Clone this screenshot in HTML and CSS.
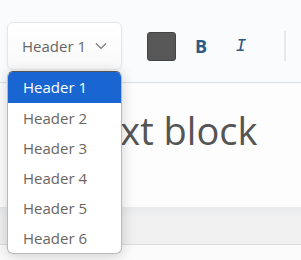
FILE: index.html
```html
<!DOCTYPE html>
<html lang="en">
<head>
    <meta charset="UTF-8">
    <title>Editor</title>
    <link rel="stylesheet" href="styles.css">
</head>
<body>
    <div class="toolbar">
        <div class="toolbar-row">
            <div class="select-wrap">
                <button class="select-button">
                    <span class="select-label">Header 1</span>
                    <svg class="chevron" width="12" height="8" viewBox="0 0 12 8">
                        <path d="M1 1.5 L6 6.5 L11 1.5" fill="none" stroke="#777" stroke-width="1.2"/>
                    </svg>
                </button>
                <ul class="select-menu">
                    <li class="menu-item active">Header 1</li>
                    <li class="menu-item">Header 2</li>
                    <li class="menu-item">Header 3</li>
                    <li class="menu-item">Header 4</li>
                    <li class="menu-item">Header 5</li>
                    <li class="menu-item">Header 6</li>
                </ul>
            </div>
            <div class="color-swatch"></div>
            <button class="format-btn bold">B</button>
            <button class="format-btn italic">I</button>
            <div class="divider"></div>
        </div>
    </div>

    <div class="editor">
        <div class="block">
            <h1 class="block-text">Text block</h1>
        </div>
        <div class="block-gap"></div>
    </div>
</body>
</html>
```

FILE: styles.css
```css
* {
    margin: 0;
    padding: 0;
    box-sizing: border-box;
}

body {
    font-family: 'Open Sans', 'Noto Sans', sans-serif;
    background: #fbfbfc;
    color: #555;
    width: 301px;
    height: 260px;
    overflow: hidden;
}

.toolbar {
    height: 83px;
    padding: 22px 0 0 7px;
    background: #fafbfc;
    border-bottom: 1px solid #dedfe2;
}

.toolbar-row {
    height: 48px;
    display: flex;
    align-items: center;
}

.select-wrap {
    position: relative;
    width: 115px;
    height: 48px;
}

.select-button {
    width: 100%;
    height: 100%;
    display: flex;
    align-items: center;
    justify-content: space-between;
    padding: 0 14px 0 14px;
    background: linear-gradient(#ffffff, #f9f9fa);
    border: 1px solid #e6e7e9;
    border-radius: 6px;
    box-shadow: 0 1px 3px rgba(0, 0, 0, 0.06);
    font-family: inherit;
    font-size: 15px;
    color: #666;
}

.chevron {
    display: block;
}

.select-menu {
    position: absolute;
    top: 49px;
    left: 0;
    width: 115px;
    list-style: none;
    background: #fff;
    border: 1px solid #b9b9bb;
    border-top-color: #555;
    border-radius: 6px;
    overflow: hidden;
    box-shadow: 0 2px 14px rgba(0, 0, 0, 0.18);
    z-index: 10;
}

.menu-item {
    height: 30px;
    line-height: 30px;
    padding-left: 15px;
    font-size: 15px;
    color: #6a655f;
}

.menu-item.active {
    height: 31px;
    line-height: 31px;
    background: #1966d2;
    color: #fff;
}

.color-swatch {
    width: 29px;
    height: 29px;
    margin-left: 25px;
    background: #575757;
    border: 1px solid #444;
    border-radius: 3px;
}

.format-btn {
    border: none;
    background: none;
    color: #2d5a83;
    font-size: 18px;
    width: 40px;
    text-align: center;
}

.format-btn.bold {
    margin-left: 5px;
    font-family: 'Open Sans', sans-serif;
    font-weight: 700;
}

.format-btn.italic {
    font-family: 'Liberation Mono', monospace;
    font-style: italic;
    font-weight: 400;
}

.divider {
    width: 2px;
    height: 30px;
    margin-left: 23px;
    background: #e8e9eb;
}

.editor {
    display: flex;
    flex-direction: column;
}

.block {
    height: 124px;
    padding: 23px 0 0 78px;
    background: #fdfdfe;
    box-shadow: 0 2px 4px rgba(0, 0, 0, 0.06);
}

.block-text {
    font-size: 38px;
    font-weight: 400;
    color: #555;
    line-height: 48px;
}

.block-gap {
    height: 38px;
    background: linear-gradient(#e9eaeb, #f0f0f1 30%, #f0f0f1);
    border-bottom: 1px solid #dadbdd;
}
```
